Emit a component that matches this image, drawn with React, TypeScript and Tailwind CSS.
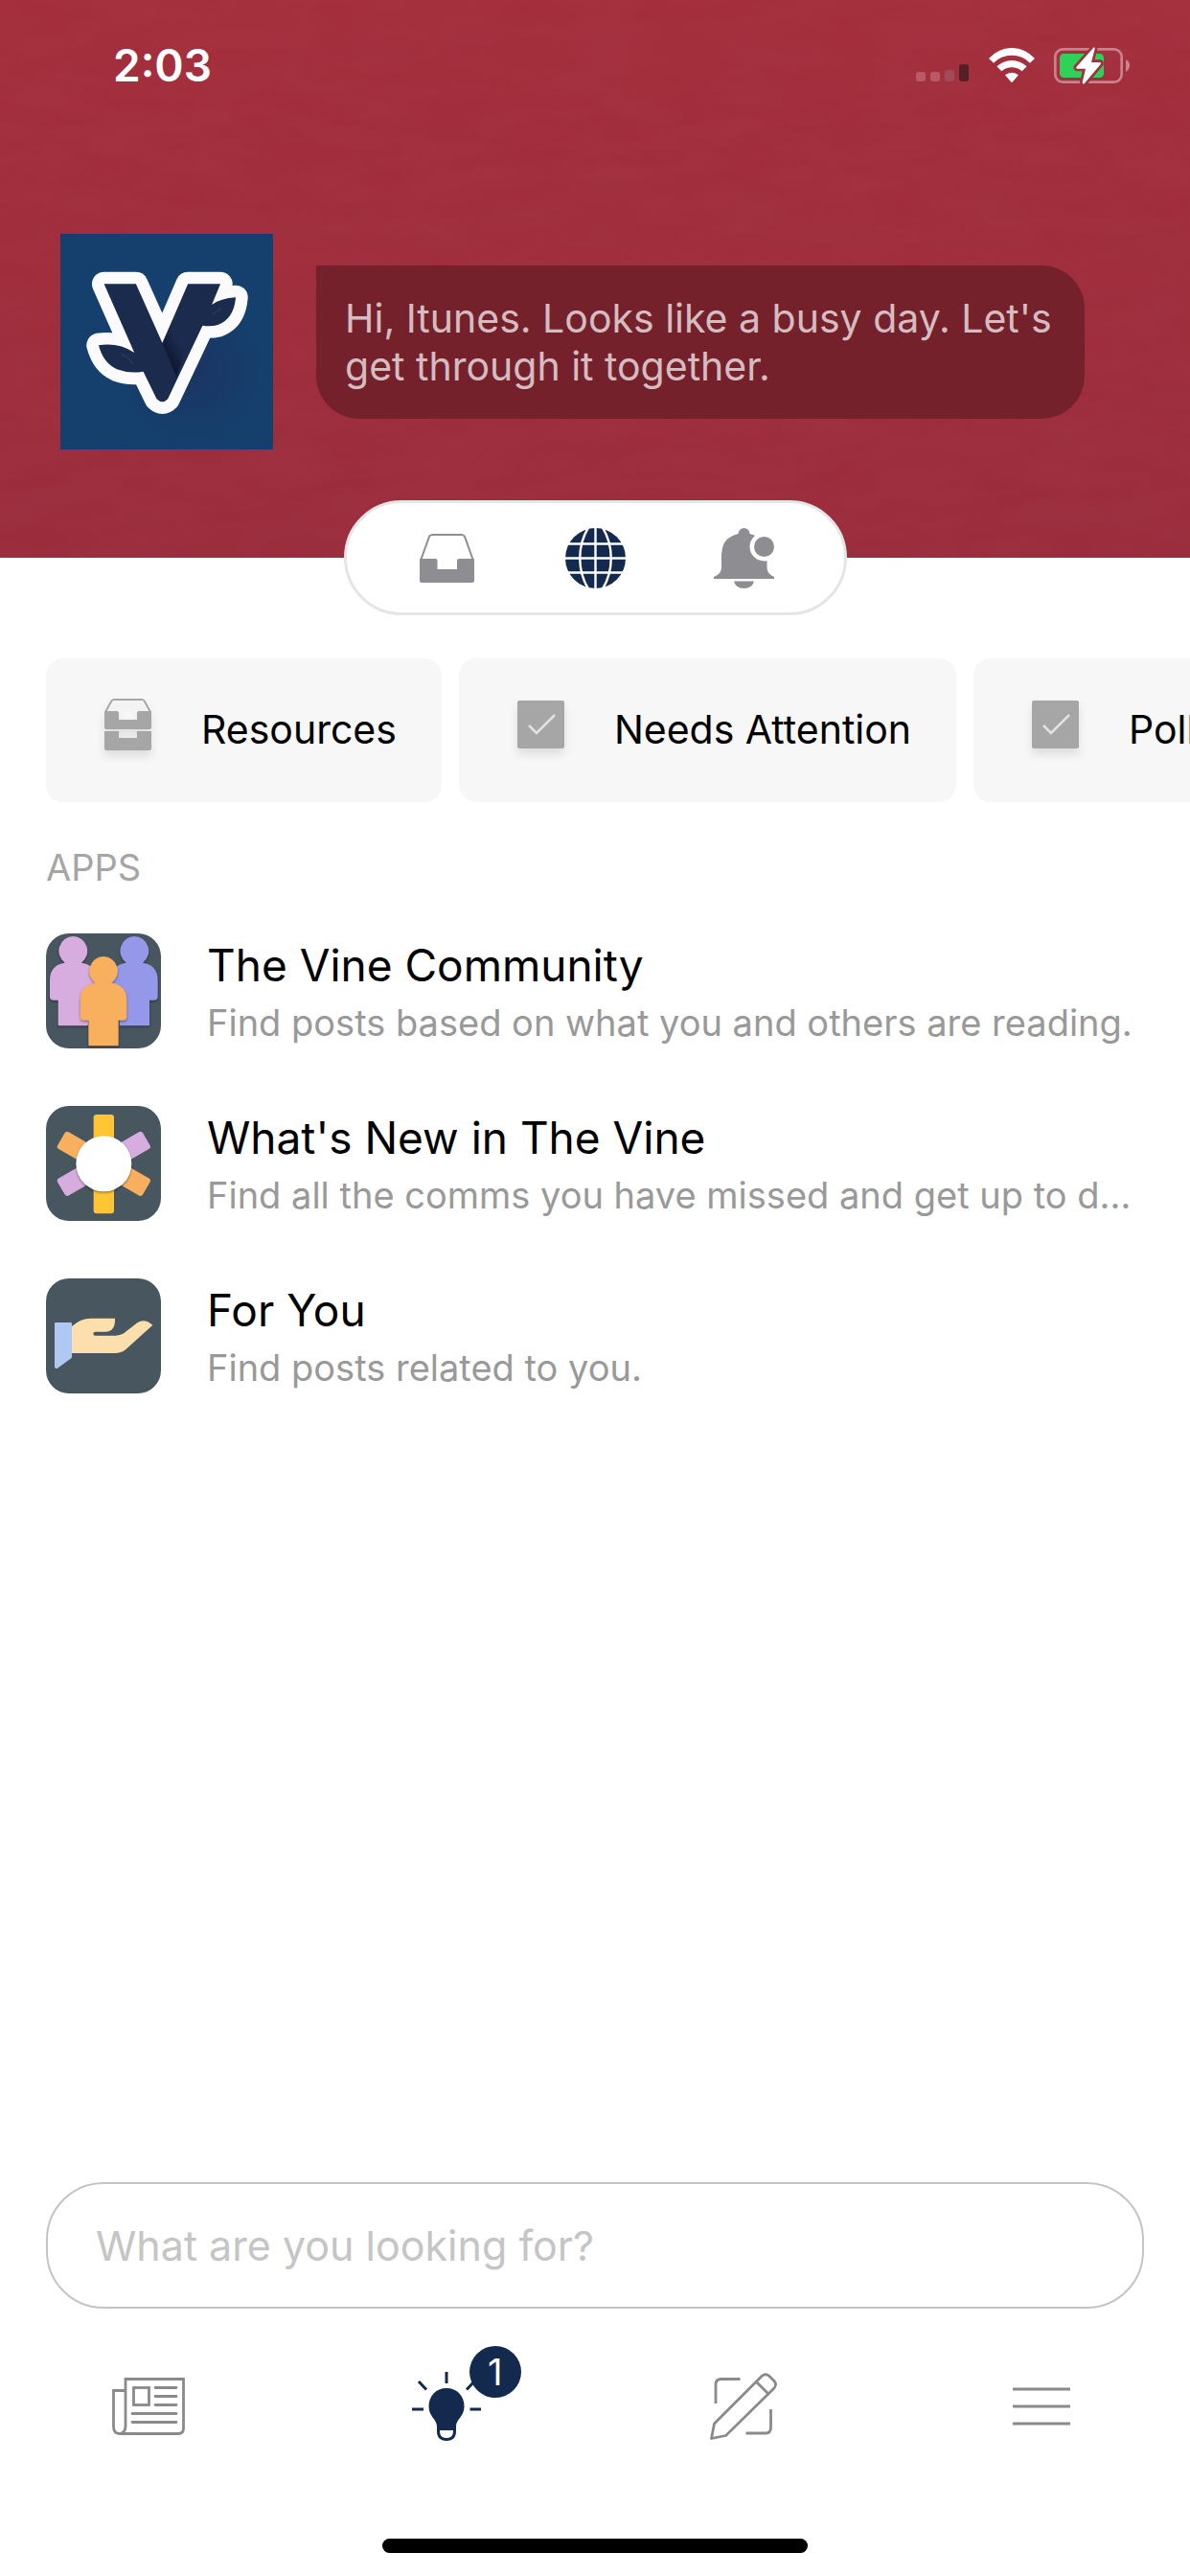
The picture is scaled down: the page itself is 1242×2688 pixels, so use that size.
import React from "react";

function StatusBar() {
  return (
    <div className="flex items-center justify-between pt-11 pl-[118px] pr-[62px]">
      <time className="text-[46px] leading-[48px] font-semibold text-white">2:03</time>
      <div className="flex items-center gap-5">
        <svg className="mt-4 h-5 w-[57px]" viewBox="78 108 171 60" aria-label="Signal">
          <rect x="81" y="135" width="30" height="30" rx="9" fill="#b95a68" />
          <rect x="126" y="135" width="30" height="30" rx="9" fill="#b95a68" />
          <rect x="171" y="129" width="30" height="36" rx="9" fill="#9e4c57" />
          <rect x="216" y="111" width="30" height="54" rx="9" fill="#541f27" />
        </svg>
        <svg className="h-9 w-12" viewBox="305 57 144 108" fill="#fff" aria-label="Wi-Fi">
          <path d="M305 90A95 95 0 0 1 449 90L434 104A80 80 0 0 0 320 104Z" />
          <path d="M330 115A68 68 0 0 1 424 115L409 130A49 49 0 0 0 345 130Z" />
          <path d="M356 142A32 32 0 0 1 398 142L380 163Q377 166 374 163Z" />
        </svg>
        <svg className="h-[39px] w-20" viewBox="507 54 240 117" aria-label="Battery charging">
          <rect x="511" y="61" width="208" height="103" rx="24" fill="none" stroke="#c9838c" strokeWidth="8" />
          <rect x="525" y="75" width="138" height="75" rx="13" fill="#30d158" />
          <path d="M732 94Q744 99 744 112T732 132Z" fill="#c9838c" />
          <path
            d="M632 55L577 117Q575 122 580 122H606L596 165Q597 171 602 169L654 107Q656 102 650 102H624L635 60Q635 54 632 55Z"
            fill="#fff"
            stroke="#a32e3c"
            strokeWidth="16"
            paintOrder="stroke"
            strokeLinejoin="round"
          />
        </svg>
      </div>
    </div>
  );
}

const vine =
  "M205 230H305L388 415L468 230H570L543 295Q570 275 618 272Q612 340 562 358Q540 364 514 360L405 590Q388 608 370 590L328 504Q285 512 245 497Q203 478 188 422Q250 412 300 445Z";

function Logo() {
  return (
    <svg className="h-[225px] w-[222px] shrink-0" viewBox="68 73 667 675" preserveAspectRatio="none" role="img" aria-label="The Vine">
      <defs>
        <linearGradient id="fold" x1="405" y1="470" x2="455" y2="440" gradientUnits="userSpaceOnUse">
          <stop offset="0" stopColor="#10162f" />
          <stop offset="1" stopColor="#1a2b4e" />
        </linearGradient>
        <radialGradient id="glow" cx="480" cy="500" r="220" gradientUnits="userSpaceOnUse">
          <stop offset="0" stopColor="#1b3463" />
          <stop offset="1" stopColor="#153f6c" />
        </radialGradient>
      </defs>
      <rect x="68" y="73" width="667" height="675" fill="url(#glow)" />
      <path d={vine} fill="#fbfafc" stroke="#fbfafc" strokeWidth="76" strokeLinejoin="round" />
      <path d={vine} fill="#1a2b4e" />
      <path d="M388 415L420 343L480 385L432 520Z" fill="url(#fold)" />
      <path d="M545 325Q560 318 572 305M260 450Q285 462 296 482" fill="none" stroke="#33406b" strokeWidth="3" />
    </svg>
  );
}

function Header() {
  return (
    <header className="relative bg-linear-to-b from-[#a42d3b] to-[#9b2b3b] pb-[113px]">
      <svg className="absolute inset-0 h-full w-full opacity-4" aria-hidden="true">
        <filter id="paper">
          <feTurbulence type="fractalNoise" baseFrequency="0.012 0.04" numOctaves="3" seed="4" />
          <feColorMatrix type="saturate" values="0" />
        </filter>
        <rect width="100%" height="100%" filter="url(#paper)" />
      </svg>
      <div className="relative">
        <StatusBar />
        <div className="mt-[152px] flex items-center gap-[45px] pl-[63px] pr-[110px]">
          <Logo />
          <p className="flex-1 rounded-[45px] rounded-tl-none bg-[#74212c] px-[30px] py-[30px] text-[41px] leading-[50px] text-[#d5bcc0]">
            Hi, Itunes. Looks like a busy day. Let's get through it together.
          </p>
        </div>
      </div>
    </header>
  );
}

function InboxIcon() {
  return (
    <svg className="h-[51px] w-[57px]" viewBox="0 0 57 51" fill="#8e8d92">
      <path d="M1 28L10 3Q11 1 13 1H44Q46 1 47 3L56 28" fill="none" stroke="#8e8d92" strokeWidth="2" />
      <path d="M0 26H16.500Q18.500 26 18.500 28V37H39V28Q39 26 41 26H57V49Q57 51 55 51H2Q0 51 0 49Z" />
    </svg>
  );
}

function GlobeIcon() {
  return (
    <svg className="h-[63px] w-[63px]" viewBox="0 0 63 63">
      <circle cx="31.500" cy="31.500" r="31.500" fill="#13294d" />
      <path
        d="M31.500 0V63M0 16.500H63M0 31.500H63M0 46.500H63M25 -2C12 18 12 45 25 65M38 -2C51 18 51 45 38 65"
        fill="none"
        stroke="#fff"
        strokeWidth="2.400"
      />
    </svg>
  );
}

function BellIcon() {
  return (
    <svg className="h-[63px] w-[63px]" viewBox="0 0 63 63" fill="#8e8d92">
      <path d="M25.500 6A6 6 0 0 1 37.500 6Q55.500 10 55.500 28V41Q55.500 48 63 51V53H0V51Q8 48 8 41V28Q8 10 25.500 6Z" />
      <path d="M21 55.500H42Q40 63 31.500 63T21 55.500Z" />
      <circle cx="52.500" cy="19.500" r="15" fill="#fff" />
      <circle cx="52.500" cy="19.500" r="10.500" />
    </svg>
  );
}

function DrawerIcon() {
  return (
    <svg className="h-[54px] w-[49px] overflow-visible drop-shadow-[0_6px_5px_rgba(0,0,0,0.1)]" viewBox="0 0 49 54" fill="#a6a6a6">
      <path d="M1 14L7 3Q8 1 10 1H39Q41 1 42 3L48 14" fill="none" stroke="#a6a6a6" strokeWidth="2" />
      <path d="M0 13H13Q15 13 15 15V22H34V15Q34 13 36 13H49V30Q49 32 47 32H2Q0 32 0 30Z" />
      <path d="M0 34H15V41H34V34H49V52Q49 54 47 54H2Q0 54 0 52Z" />
    </svg>
  );
}

function CheckIcon() {
  return (
    <svg className="h-[50px] w-[49px] overflow-visible drop-shadow-[0_6px_5px_rgba(0,0,0,0.1)]" viewBox="0 0 49 50">
      <rect width="49" height="50" rx="2" fill="#a6a6a6" />
      <path d="M12 26L20 34L39 15" fill="none" stroke="#e2e2e2" strokeWidth="2.500" />
    </svg>
  );
}

function Person({ x, y, fill }: { x: number; y: number; fill: string }) {
  return (
    <g transform={`translate(${x} ${y})`} fill={fill} className="drop-shadow-[0_4px_3px_rgba(0,0,0,0.4)]">
      <path d="M0 -46A46 46 0 0 1 26 37Q73 44 73 92V142Q73 154 61 154H47V231Q47 234 44 234H-44Q-47 234 -47 231V154H-61Q-73 154 -73 142V92Q-73 44 -26 37A46 46 0 0 1 0 -46Z" />
    </g>
  );
}

function CommunityIcon() {
  return (
    <svg className="h-full w-full" viewBox="54 72 360 360">
      <Person x={139} y={127} fill="#d7addf" />
      <Person x={331} y={127} fill="#9598e8" />
      <Person x={234} y={190} fill="#f8b05e" />
    </svg>
  );
}

function SunIcon() {
  return (
    <svg className="h-full w-full" viewBox="0 0 360 360">
      <rect x="149" y="27" width="64" height="310" rx="9" fill="#ffc533" />
      <rect x="150" y="27" width="62" height="120" rx="9" fill="#d7addf" transform="rotate(60 181 181)" />
      <rect x="150" y="27" width="62" height="120" rx="9" fill="#f8b05e" transform="rotate(120 181 181)" />
      <rect x="150" y="27" width="62" height="120" rx="9" fill="#d7addf" transform="rotate(240 181 181)" />
      <rect x="150" y="27" width="62" height="120" rx="9" fill="#f8b05e" transform="rotate(300 181 181)" />
      <circle cx="181" cy="181" r="87" fill="#fff" className="drop-shadow-[0_4px_3px_rgba(0,0,0,0.4)]" />
    </svg>
  );
}

function HandIcon() {
  return (
    <svg className="h-full w-full" viewBox="54 1152 360 360">
      <path d="M84 1290H132Q135 1290 135 1294V1400L90 1433Q81 1436 81 1428V1294Q81 1290 84 1290Z" fill="#afc8f4" />
      <path
        d="M135 1302Q162 1277 195 1277H270Q272 1318 240 1319H208Q202 1319 202 1325T208 1331H272Q290 1331 305 1318L340 1291Q362 1276 388 1298L305 1373Q290 1386 270 1386H135Z"
        fill="#fddfae"
      />
    </svg>
  );
}

function NewsIcon() {
  return (
    <svg className="h-[60px] w-[76px]" viewBox="0 0 76 60" fill="none" stroke="#8a8a8a" strokeWidth="2.800">
      <path d="M14 1.500H74.500V53Q74.500 58.500 69 58.500H8Q14 58 14 50Z" />
      <path d="M13 13.500H1.500V51Q1.500 58.500 8 58.500" />
      <rect x="22.500" y="10.500" width="16" height="18" />
      <path d="M45 10.500H67M45 19.500H67M45 28.500H67M21 37.500H67M21 46.500H67" strokeLinecap="round" />
    </svg>
  );
}

function BulbIcon() {
  return (
    <svg className="h-[72px] w-[72px]" viewBox="0 0 72 72" fill="none" stroke="#13294d" strokeWidth="3">
      <path d="M36 0V12M7 10L15 18.500M65 10L57 18.500M0 39H12M60.500 39H72" />
      <path
        d="M36 17C47 17 54.500 25 54.500 36C54.500 47 46 49 46 57V61H26V57C26 49 17.500 47 17.500 36C17.500 25 25 17 36 17Z"
        fill="#13294d"
        stroke="none"
      />
      <path d="M27.500 58V62Q27.500 70.500 36 70.500T44.500 62V58" />
    </svg>
  );
}

function ComposeIcon() {
  return (
    <svg className="h-[70px] w-[70px]" viewBox="0 0 70 70" fill="none" stroke="#8a8a8a" strokeWidth="2.800">
      <path d="M6 32V12Q6 6.500 12 6.500H31.500M63.500 38V57Q63.500 63 58 63H37.500" />
      <path d="M1.500 68.500L4.500 53L54 3.500Q58 0 62 3.500L67 8.500Q70 12 67 16L16.500 65.500Z" strokeLinejoin="round" />
      <path d="M48.500 9.500L60.500 21.500" />
    </svg>
  );
}

function MenuIcon() {
  return (
    <svg className="h-10 w-[60px]" viewBox="0 0 60 40" stroke="#8a8a8a" strokeWidth="3">
      <path d="M0 2H60M0 20H60M0 38H60" />
    </svg>
  );
}

const shortcuts = [
  { label: "Resources", icon: <DrawerIcon /> },
  { label: "Needs Attention", icon: <CheckIcon /> },
  { label: "Polls", icon: <CheckIcon /> },
];

const apps = [
  {
    title: "The Vine Community",
    text: "Find posts based on what you and others are reading.",
    icon: <CommunityIcon />,
  },
  {
    title: "What's New in The Vine",
    text: "Find all the comms you have missed and get up to date.",
    icon: <SunIcon />,
  },
  { title: "For You", text: "Find posts related to you.", icon: <HandIcon /> },
];

const tabs = [
  { label: "News", icon: <NewsIcon /> },
  { label: "Discover", icon: <BulbIcon />, badge: 1 },
  { label: "Compose", icon: <ComposeIcon /> },
  { label: "Menu", icon: <MenuIcon /> },
];

export default function App() {
  return (
    <div className="flex min-h-screen flex-col overflow-hidden bg-white font-['Inter','Liberation_Sans',sans-serif] text-black">
      <Header />

      <nav
        aria-label="Sections"
        className="relative -mt-[60px] flex h-[120px] items-center self-center rounded-full border-3 border-[#e5e5e5] bg-white px-[27px]"
      >
        <button aria-label="Inbox" className="flex w-[155px] justify-center">
          <InboxIcon />
        </button>
        <button aria-label="Explore" aria-current="page" className="flex w-[155px] justify-center">
          <GlobeIcon />
        </button>
        <button aria-label="Notifications" className="flex w-[155px] justify-center">
          <BellIcon />
        </button>
      </nav>

      <main className="flex-1">
        <div className="mt-[45px] flex gap-[18px] overflow-hidden pl-12">
          {shortcuts.map((s) => (
            <button
              key={s.label}
              className="flex h-[150px] shrink-0 items-center gap-[52px] rounded-[18px] bg-[#f7f7f7] pl-[61px] pr-[47px] text-[41px] whitespace-nowrap"
            >
              <span className="mb-3">{s.icon}</span>
              {s.label}
            </button>
          ))}
        </div>

        <h2 className="mt-11 px-12 text-[38px] leading-[48px] text-[#a5a5a5]">APPS</h2>

        <ul className="mt-[45px] flex flex-col gap-[57px] px-12">
          {apps.map((app) => (
            <li key={app.title}>
              <a href="#" className="flex items-start gap-12">
                <span className="h-[120px] w-[120px] shrink-0 overflow-hidden rounded-[24px] bg-[#48565f]">{app.icon}</span>
                <span className="min-w-0 flex-1 pt-[3px]">
                  <span className="block text-[46px] leading-[60px]">{app.title}</span>
                  <span className="block truncate text-[38px] leading-[60px] text-[#999]">{app.text}</span>
                </span>
              </a>
            </li>
          ))}
        </ul>
      </main>

      <footer>
        <div className="px-12">
          <input
            type="search"
            aria-label="What are you looking for?"
            placeholder="What are you looking for?"
            className="h-[132px] w-full rounded-[60px] border-2 border-[#c4c4c4] bg-white px-[50px] text-[43px] outline-none placeholder:text-[#c5c5c5]"
          />
        </div>
        <nav aria-label="Main" className="mt-[42px] grid grid-cols-4">
          {tabs.map((tab) => (
            <button key={tab.label} aria-label={tab.label} className="flex h-[120px] items-center justify-center">
              <span className="relative">
                {tab.icon}
                {tab.badge && (
                  <span className="absolute -top-[27px] -right-[42px] flex h-[54px] w-[54px] items-center justify-center rounded-full bg-[#13294d] text-[38px] text-white">
                    {tab.badge}
                  </span>
                )}
              </span>
            </button>
          ))}
        </nav>
        <div className="mx-auto mt-[78px] mb-6 h-[15px] w-[444px] rounded-full bg-black" />
      </footer>
    </div>
  );
}
